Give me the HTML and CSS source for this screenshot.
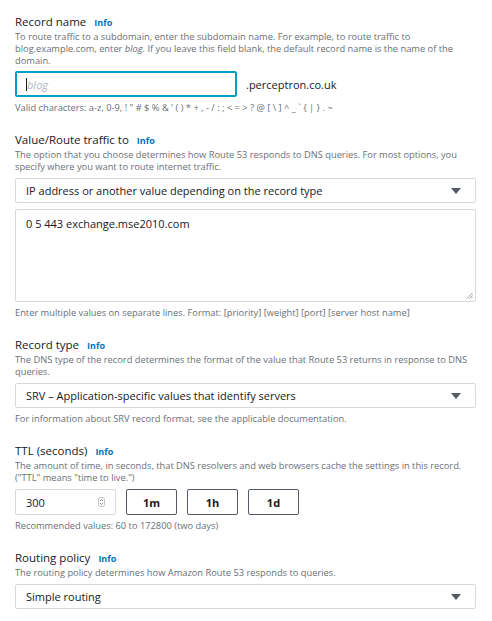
FILE: index.html
```html
<!DOCTYPE html>
<html>
<head>
<meta charset="utf-8">
<link rel="stylesheet" href="styles.css">
</head>
<body>
<div class="form">
  <section class="field first">
    <div class="label">Record name <span class="info">Info</span></div>
    <div class="desc">To route traffic to a subdomain, enter the subdomain name. For example, to route traffic to blog.example.com, enter <i>blog</i>. If you leave this field blank, the default record name is the name of the domain.</div>
    <div class="name-row">
      <div class="input focused"><span class="caret"></span><span class="placeholder">blog</span></div>
      <span class="suffix">.perceptron.co.uk</span>
    </div>
    <div class="hint">Valid characters: a-z, 0-9, ! " # $ % &amp; ' ( ) * + , - / : ; &lt; = &gt; ? @ [ \ ] ^ _ ` { | } . ~</div>
  </section>

  <section class="field">
    <div class="label">Value/Route traffic to <span class="info">Info</span></div>
    <div class="desc">The option that you choose determines how Route 53 responds to DNS queries. For most options, you specify where you want to route internet traffic.</div>
    <div class="select"><span>IP address or another value depending on the record type</span><span class="arrow"></span></div>
    <div class="textarea">0 5 443 exchange.mse2010.com
      <svg class="grip" width="7" height="7" viewBox="0 0 7 7"><path d="M6.5 1 L1 6.5 M6.5 3.5 L3.5 6.5 M6.5 5.5 L5.5 6.5" stroke="#8d9496" stroke-width="0.9"/></svg>
    </div>
    <div class="hint">Enter multiple values on separate lines. Format: [priority] [weight] [port] [server host name]</div>
  </section>

  <section class="field">
    <div class="label">Record type <span class="info">Info</span></div>
    <div class="desc">The DNS type of the record determines the format of the value that Route 53 returns in response to DNS queries.</div>
    <div class="select"><span>SRV – Application-specific values that identify servers</span><span class="arrow"></span></div>
    <div class="hint">For information about SRV record format, see the applicable documentation.</div>
  </section>

  <section class="field">
    <div class="label">TTL (seconds) <span class="info">Info</span></div>
    <div class="desc">The amount of time, in seconds, that DNS resolvers and web browsers cache the settings in this record. ("TTL" means "time to live.")</div>
    <div class="ttl-row">
      <div class="input number"><span>300</span>
        <svg class="spin" width="7" height="10" viewBox="0 0 7 10"><rect x="0.5" y="0.5" width="6" height="9" rx="2" fill="none" stroke="#b0b6b8" stroke-width="0.8"/><path d="M2 4 L3.5 2.5 L5 4 M2 6 L3.5 7.5 L5 6" fill="none" stroke="#687078" stroke-width="0.8"/></svg>
      </div>
      <div class="btn">1m</div>
      <div class="btn">1h</div>
      <div class="btn">1d</div>
    </div>
    <div class="hint">Recommended values: 60 to 172800 (two days)</div>
  </section>

  <section class="field">
    <div class="label">Routing policy <span class="info">Info</span></div>
    <div class="desc">The routing policy determines how Amazon Route 53 responds to queries.</div>
    <div class="select"><span>Simple routing</span><span class="arrow"></span></div>
  </section>
</div>
</body>
</html>
```

FILE: styles.css
```css
* { box-sizing: border-box; }
body {
  margin: 0;
  background: #ffffff;
  font-family: "Open Sans", "Noto Sans", sans-serif;
  color: #16191f;
}
.form {
  padding: 14px 16px 0 15px;
  display: flex;
  flex-direction: column;
  gap: 18px;
}
.field {
  display: flex;
  flex-direction: column;
}
.label {
  font-size: 11.5px;
  line-height: 16px;
  color: #16191f;
}
.info {
  color: #0073bb;
  font-weight: 700;
  font-size: 9px;
  margin-left: 5px;
}
.desc {
  font-size: 9.3px;
  line-height: 12px;
  color: #687078;
  margin-bottom: 5px;
  padding-right: 4px;
}
.hint {
  font-size: 9.3px;
  line-height: 12px;
  color: #687078;
  margin-top: 5px;
}
.name-row {
  display: flex;
  align-items: center;
  gap: 9px;
}
.first .desc {
  margin-bottom: 4px;
}
.input {
  height: 26px;
  border: 1px solid #aab7b8;
  border-radius: 2px;
  display: flex;
  align-items: center;
  font-size: 11px;
  padding-left: 10px;
}
.input.focused {
  width: 222px;
  border: 2px solid #00a1c9;
  padding-left: 9px;
}
.caret {
  width: 1px;
  height: 13px;
  background: #16191f;
}
.placeholder {
  color: #aab7b8;
  font-style: italic;
}
.suffix {
  font-size: 11px;
}
.select {
  height: 25px;
  border: 1px solid #d5dbdb;
  border-radius: 2px;
  display: flex;
  align-items: center;
  justify-content: space-between;
  padding: 0 14px 0 10px;
  font-size: 11px;
}
.arrow {
  width: 0;
  height: 0;
  border-left: 5px solid transparent;
  border-right: 5px solid transparent;
  border-top: 6px solid #545b64;
}
.textarea {
  position: relative;
  margin-top: 6px;
  height: 93px;
  border: 1px solid #d5dbdb;
  border-radius: 2px;
  padding: 7px 10px;
  font-size: 11px;
  line-height: 14px;
}
.grip {
  position: absolute;
  right: 2px;
  bottom: 2px;
}
.ttl-row {
  display: flex;
  gap: 10px;
  align-items: center;
}
.input.number {
  width: 101px;
  justify-content: space-between;
  padding-right: 10px;
  border-color: #d5dbdb;
}
.btn {
  width: 51px;
  height: 26px;
  border: 1px solid #545b64;
  border-radius: 2px;
  display: flex;
  align-items: center;
  justify-content: center;
  font-size: 11px;
  font-weight: 700;
  color: #16191f;
}
```
